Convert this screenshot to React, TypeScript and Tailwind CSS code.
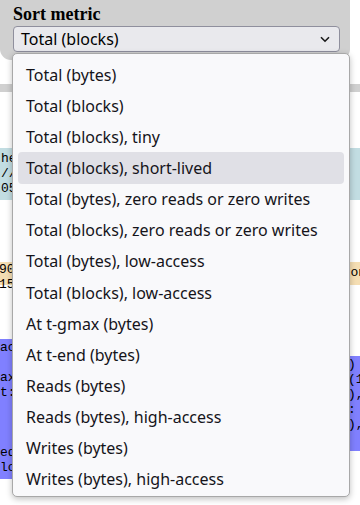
import React from 'react';

const options = [
  'Total (bytes)',
  'Total (blocks)',
  'Total (blocks), tiny',
  'Total (blocks), short-lived',
  'Total (bytes), zero reads or zero writes',
  'Total (blocks), zero reads or zero writes',
  'Total (bytes), low-access',
  'Total (blocks), low-access',
  'At t-gmax (bytes)',
  'At t-end (bytes)',
  'Reads (bytes)',
  'Reads (bytes), high-access',
  'Writes (bytes)',
  'Writes (bytes), high-access',
];

const mono = "font-['Liberation_Mono',monospace] text-[13px] leading-[15px] text-black whitespace-pre";

const App: React.FC = () => {
  const selected = 3;

  return (
    <div className="relative w-[360px] h-[505px] overflow-hidden bg-white font-['Noto_Sans',sans-serif]">
      {/* Controls panel */}
      <div className="w-[350px] h-[60px] bg-[#d0d0d0] rounded-b-[11px] px-[13px] pt-[3px]">
        <div className="font-['Liberation_Serif',serif] font-bold text-[18px] leading-[22px] text-black">
          Sort metric
        </div>
        <div className="mt-px h-[26px] w-[327px] flex items-center justify-between rounded-[4px] border border-[#8f8f9d] bg-[#e9e9ed] pl-[7px] pr-[9px] text-[16px] leading-[20px] text-black">
          <span>Total (blocks)</span>
          <svg width="10" height="7" viewBox="0 0 10 7" fill="none">
            <path d="M1 1.2l4 4 4-4" stroke="#1a1a1a" strokeWidth="1.6" />
          </svg>
        </div>
      </div>

      {/* Page content behind the dropdown */}
      <div className="mt-[24px] h-[8px] bg-[#d0d0d0]" />

      <div className="mt-[56px] h-[52px] bg-[#c2dde2] pt-[3px] pl-px">
        <div className={mono}>hea</div>
        <div className={mono}>//m</div>
        <div className={mono}>056</div>
      </div>

      <div className="mt-[62px] h-[23px] bg-[#f5deb3] flex justify-between">
        <div className="-ml-[1px]">
          <div className={`${mono} leading-[12px]`}>906</div>
          <div className={`${mono} leading-[12px]`}>151</div>
        </div>
        <div className={`${mono} pt-[3px] -mr-[6px]`}>tion</div>
      </div>

      <div className="mt-[54px] flex justify-between items-start">
        <div className="w-[30px] h-[140px] bg-[#8080ff] pt-[1px]">
          <div className={mono}>ach</div>
          <div className={mono}> </div>
          <div className={mono}>ax:</div>
          <div className={mono}>t:</div>
          <div className={mono}> </div>
          <div className={mono}> </div>
          <div className={mono}> </div>
          <div className={mono}>ed</div>
          <div className={mono}>loc</div>
        </div>
        <div className="mt-[17px] w-[30px] h-[95px] bg-[#8080ff] pt-[1px] pl-[18px]">
          <div className={mono}>)</div>
          <div className={mono}>(1</div>
          <div className={mono}>),</div>
          <div className={mono}>:</div>
          <div className={mono}>),</div>
        </div>
      </div>

      {/* Open dropdown list */}
      <div className="absolute left-[12px] top-[53px] w-[338px] h-[444px] rounded-[5px] border border-[#a8a8a8] bg-[#f9f9fb] shadow-[0_2px_6px_rgba(0,0,0,0.25)] px-[5px] pt-[5px]">
        {options.map((opt, i) => (
          <div
            key={opt}
            className={`h-[31.15px] flex items-center pl-[8px] rounded-[4px] text-[16px] text-[#15141a] whitespace-nowrap ${
              i === selected ? 'bg-[#e0e0e6]' : ''
            }`}
          >
            {opt}
          </div>
        ))}
      </div>
    </div>
  );
};

export default App;
